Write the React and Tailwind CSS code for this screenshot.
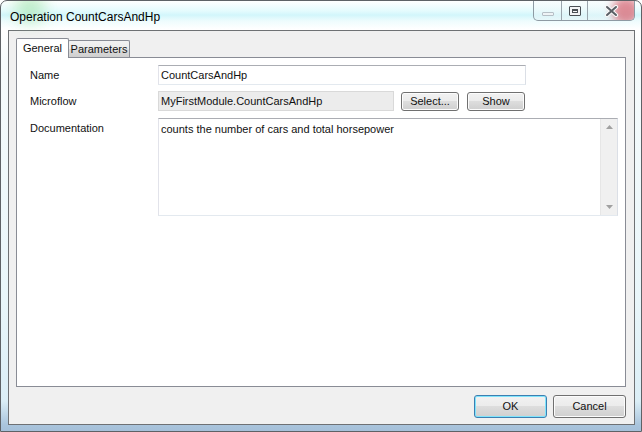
import React from "react";

function CaptionButtons() {
  return (
    <div className="absolute top-0 right-[6px] flex h-[20px] rounded-b-[5px] border border-t-0 border-[#8e9aa3] bg-gradient-to-b from-[#f4fbfd]/60 to-[#e4f0f4]/40 overflow-hidden">
      <div className="w-[28px] h-full flex items-center justify-center border-r border-[#9aa5ad]">
        <div className="w-[12px] h-[4px] mt-[6px] border border-[#b6bfc6] bg-[#eef3f6] rounded-[1px]" />
      </div>
      <div className="w-[26px] h-full flex items-center justify-center border-r border-[#9aa5ad]">
        <div className="w-[12px] h-[10px] border border-[#4a4f55] bg-[#f2f4f6] rounded-[1px] flex items-center justify-center">
          <div className="w-[6px] h-[4px] border border-[#4a4f55] border-t-2" />
        </div>
      </div>
      <div className="relative w-[46px] h-full flex items-center justify-center">
        <div className="absolute right-[-6px] top-[-4px] w-[28px] h-[28px] rounded-full bg-[#d9707c] blur-[4px] opacity-80" />
        <svg width="15" height="12" viewBox="0 0 15 12" className="relative">
          <path d="M3 2 L12 10 M12 2 L3 10" stroke="#f7f7f7" strokeWidth="4.2" strokeLinecap="round" />
          <path d="M3 2 L12 10 M12 2 L3 10" stroke="#5a5f66" strokeWidth="2" strokeLinecap="round" />
        </svg>
      </div>
    </div>
  );
}

function WinButton({ children, width = "w-[58px]", height = "h-[19px]", focused = false }) {
  return (
    <div
      className={`${width} ${height} rounded-[3px] border ${
        focused ? "border-[#3c7fb1] shadow-[inset_0_0_0_1px_#7fe4fc]" : "border-[#707070] shadow-[inset_0_0_0_1px_#fcfcfc]"
      } bg-[linear-gradient(to_bottom,#f2f2f2_0%,#ebebeb_50%,#dddddd_50%,#cfcfcf_100%)] flex items-center justify-center text-[11px] text-[#111]`}
    >
      {children}
    </div>
  );
}

export default function App() {
  return (
    <div
      className="w-[642px] h-[432px] overflow-hidden bg-white"
      style={{ fontFamily: '"Liberation Sans", Arial, sans-serif' }}
    >
      <div className="relative w-[642px] h-[432px] rounded-t-[7px] border border-[#5e6266] bg-[linear-gradient(to_bottom,#ffffff_0px,#e4fbfd_10px,#d2f6fb_14px,#eefcfd_20px,#ffffff_28px,#f6fbfc_60px,#e9f6fa_300px,#dbeef6_400px,#a9c4dc_424px,#a4bfd8_432px)] overflow-hidden">
        <div className="absolute left-[14px] top-[-8px] w-[30px] h-[30px] rounded-full bg-[#a8e6b2] blur-[8px] opacity-70" />
        <div className="relative h-[29px] flex items-center pl-[9px] pt-[2px] text-[12px] text-black">
          Operation CountCarsAndHp
        </div>
        <CaptionButtons />

        <div className="ml-[7px] mr-[6px] h-[395px] border border-[#6e7174] bg-[#f0f0f0] flex flex-col pl-[7px] pr-[8px] pt-[7px]">
          {/* Tabs */}
          <div className="flex items-end h-[19px] text-[11px] text-[#111]">
            <div className="relative z-10 w-[53px] h-[20px] mb-[-1px] border border-b-0 border-[#898c95] bg-white rounded-t-[2px] flex items-center justify-center pb-[1px]">
              General
            </div>
            <div className="w-[62px] h-[17px] ml-[-1px] border border-b-0 border-[#898c95] bg-[linear-gradient(to_bottom,#f2f2f2_0%,#ebebeb_50%,#dddddd_50%,#cfcfcf_100%)] rounded-t-[2px] flex items-center justify-center pt-[1px]">
              Parameters
            </div>
          </div>

          {/* Panel */}
          <div className="h-[330px] border border-[#898c95] bg-white pl-[13px] pr-[7px] pt-[7px] text-[11px] text-[#111]">
            <div className="flex items-center h-[20px]">
              <div className="w-[128px]">Name</div>
              <div className="w-[368px] h-[20px] border border-[#abadb3] border-b-[#e3e9ef] border-l-[#e2e3ea] border-r-[#dbdfe6] bg-white flex items-center pl-[2px]">
                CountCarsAndHp
              </div>
            </div>

            <div className="flex items-center h-[20px] mt-[6px]">
              <div className="w-[128px]">Microflow</div>
              <div className="w-[236px] h-[20px] border border-[#d9d9d9] bg-[#ececec] flex items-center pl-[2px]">
                MyFirstModule.CountCarsAndHp
              </div>
              <div className="ml-[7px]">
                <WinButton>Select...</WinButton>
              </div>
              <div className="ml-[8px]">
                <WinButton>Show</WinButton>
              </div>
            </div>

            <div className="flex items-start mt-[7px]">
              <div className="w-[128px] pt-[2px]">Documentation</div>
              <div className="w-[460px] h-[98px] border border-[#abadb3] border-b-[#e3e9ef] border-l-[#e2e3ea] border-r-[#dbdfe6] bg-white flex">
                <div className="flex-1 pl-[2px] pt-[2px]">counts the number of cars and total horsepower</div>
                <div className="w-[17px] h-full bg-[#f0f0f0] border-l border-[#e6e6e6] flex flex-col items-center justify-between py-[6px]">
                  <svg width="7" height="4" viewBox="0 0 7 4">
                    <path d="M0 4 L3.5 0 L7 4 Z" fill="#a0a0a0" />
                  </svg>
                  <svg width="7" height="4" viewBox="0 0 7 4">
                    <path d="M0 0 L3.5 4 L7 0 Z" fill="#a0a0a0" />
                  </svg>
                </div>
              </div>
            </div>
          </div>

          {/* Bottom buttons */}
          <div className="flex justify-end mt-[8px] gap-[6px]">
            <WinButton width="w-[73px]" height="h-[23px]" focused>OK</WinButton>
            <WinButton width="w-[73px]" height="h-[23px]">Cancel</WinButton>
          </div>
        </div>
      </div>
    </div>
  );
}
